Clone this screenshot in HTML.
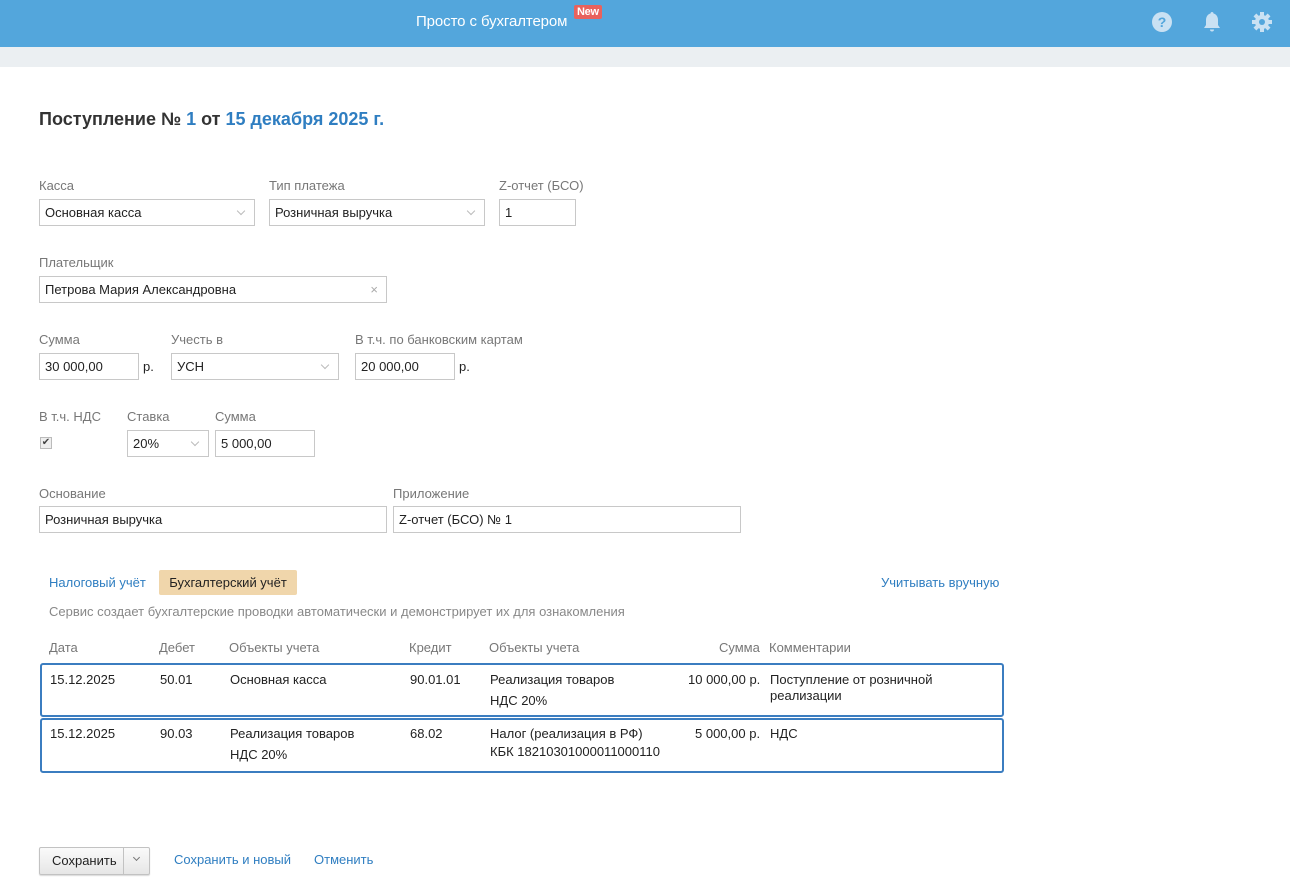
<!DOCTYPE html>
<html><head><meta charset="utf-8"><style>
*{box-sizing:border-box;margin:0;padding:0}
body{width:1290px;height:885px;position:relative;background:#fff;font-family:"Liberation Sans",Arial,sans-serif;font-size:13px;color:#222;overflow:hidden}
.a{position:absolute;white-space:nowrap}
.hdr{position:absolute;left:0;top:0;width:1290px;height:47px;background:#53a6dc}
.strip{position:absolute;left:0;top:47px;width:1290px;height:20px;background:#ebeff2}
.lbl{color:#777;font-size:13px}
.inp{position:absolute;height:27px;border:1px solid #c8c8c8;background:#fff;padding:0 5px;line-height:25px;font-size:13px;color:#222}
.dd:after{content:"";position:absolute;right:10px;top:8px;width:5px;height:5px;border-right:1px solid #bbb;border-bottom:1px solid #bbb;transform:rotate(45deg)}
.link{color:#2f7ec1}
.row{position:absolute;left:40px;width:964px;border:2px solid #3b7dc0;border-radius:3px}
.th{color:#777}
</style></head><body>
<div class="hdr"></div>
<div class="a" style="left:416px;top:13px;color:#fff;font-size:15px;letter-spacing:-0.1px">Просто с бухгалтером</div>
<div class="a" style="left:574px;top:5px;background:#e8625d;color:#fff;font-size:11px;font-weight:bold;padding:1px 3px;border-radius:2px;letter-spacing:-0.3px">New</div>
<svg class="a" style="left:1151px;top:11px" width="22" height="22" viewBox="0 0 22 22"><circle cx="11" cy="11" r="10" fill="#c9e1f3"/><text x="11" y="16" text-anchor="middle" font-size="14" font-weight="bold" fill="#53a6dc" font-family="Liberation Sans">?</text></svg>
<svg class="a" style="left:1202px;top:11px" width="20" height="22" viewBox="0 0 20 22"><path d="M10 1c-1 0-1.5.7-1.5 1.5C5.5 3.3 4 6 4 9v5l-2 3h16l-2-3V9c0-3-1.5-5.7-4.5-6.5C11.5 1.7 11 1 10 1zM8 18.5a2 2 0 0 0 4 0z" fill="#c9e1f3"/></svg>
<svg class="a" style="left:1251px;top:11px" width="22" height="22" viewBox="0 0 22 22"><g fill="#c9e1f3"><circle cx="11" cy="11" r="7"/><rect x="9" y="1" width="4" height="20"/><rect x="1" y="9" width="20" height="4"/><rect x="9" y="1" width="4" height="20" transform="rotate(45 11 11)"/><rect x="9" y="1" width="4" height="20" transform="rotate(-45 11 11)"/></g><circle cx="11" cy="11" r="3" fill="#53a6dc"/></svg>
<div class="strip"></div>

<div class="a" style="left:39px;top:109px;font-size:18px;font-weight:bold;color:#333">Поступление № <span class="link">1</span> от <span class="link">15 декабря 2025 г.</span></div>

<div class="a lbl" style="left:39px;top:178px">Касса</div>
<div class="inp dd" style="left:39px;top:199px;width:216px">Основная касса</div>
<div class="a lbl" style="left:269px;top:178px">Тип платежа</div>
<div class="inp dd" style="left:269px;top:199px;width:216px">Розничная выручка</div>
<div class="a lbl" style="left:499px;top:178px">Z-отчет (БСО)</div>
<div class="inp" style="left:499px;top:199px;width:77px">1</div>

<div class="a lbl" style="left:39px;top:255px">Плательщик</div>
<div class="inp" style="left:39px;top:276px;width:348px">Петрова Мария Александровна<span style="position:absolute;right:8px;color:#aaa">×</span></div>

<div class="a lbl" style="left:39px;top:332px">Сумма</div>
<div class="inp" style="left:39px;top:353px;width:100px">30 000,00</div>
<div class="a" style="left:143px;top:359px">р.</div>
<div class="a lbl" style="left:171px;top:332px">Учесть в</div>
<div class="inp dd" style="left:171px;top:353px;width:168px">УСН</div>
<div class="a lbl" style="left:355px;top:332px">В т.ч. по банковским картам</div>
<div class="inp" style="left:355px;top:353px;width:100px">20 000,00</div>
<div class="a" style="left:459px;top:359px">р.</div>

<div class="a lbl" style="left:39px;top:409px">В т.ч. НДС</div>
<div class="a" style="left:40px;top:437px;width:12px;height:12px;border:1px solid #bbb;background:#eee;font-size:10px;line-height:10px;text-align:center;color:#444">✔</div>
<div class="a lbl" style="left:127px;top:409px">Ставка</div>
<div class="inp dd" style="left:127px;top:430px;width:82px">20%</div>
<div class="a lbl" style="left:215px;top:409px">Сумма</div>
<div class="inp" style="left:215px;top:430px;width:100px">5 000,00</div>

<div class="a lbl" style="left:39px;top:486px">Основание</div>
<div class="inp" style="left:39px;top:506px;width:348px">Розничная выручка</div>
<div class="a lbl" style="left:393px;top:486px">Приложение</div>
<div class="inp" style="left:393px;top:506px;width:348px">Z-отчет (БСО) № 1</div>

<div class="a link" style="left:49px;top:575px">Налоговый учёт</div>
<div class="a" style="left:159px;top:570px;width:138px;height:25px;background:#f0d6ab;border-radius:2px;line-height:25px;text-align:center">Бухгалтерский учёт</div>
<div class="a link" style="left:881px;top:575px">Учитывать вручную</div>
<div class="a" style="left:49px;top:604px;color:#888">Сервис создает бухгалтерские проводки автоматически и демонстрирует их для ознакомления</div>

<div class="a th" style="left:49px;top:640px">Дата</div>
<div class="a th" style="left:159px;top:640px">Дебет</div>
<div class="a th" style="left:229px;top:640px">Объекты учета</div>
<div class="a th" style="left:409px;top:640px">Кредит</div>
<div class="a th" style="left:489px;top:640px">Объекты учета</div>
<div class="a th" style="left:719px;top:640px">Сумма</div>
<div class="a th" style="left:769px;top:640px">Комментарии</div>

<div class="row" style="top:663px;height:54px"></div>
<div class="a" style="left:50px;top:672px">15.12.2025</div>
<div class="a" style="left:160px;top:672px">50.01</div>
<div class="a" style="left:230px;top:672px">Основная касса</div>
<div class="a" style="left:410px;top:672px">90.01.01</div>
<div class="a" style="left:490px;top:669px;line-height:21px">Реализация товаров<br>НДС 20%</div>
<div class="a" style="left:688px;top:672px">10 000,00 р.</div>
<div class="a" style="left:770px;top:672px;line-height:16px">Поступление от розничной<br>реализации</div>

<div class="row" style="top:718px;height:55px"></div>
<div class="a" style="left:50px;top:726px">15.12.2025</div>
<div class="a" style="left:160px;top:726px">90.03</div>
<div class="a" style="left:230px;top:723px;line-height:21px">Реализация товаров<br>НДС 20%</div>
<div class="a" style="left:410px;top:726px">68.02</div>
<div class="a" style="left:490px;top:725px;line-height:18px">Налог (реализация в РФ)<br>КБК 18210301000011000110</div>
<div class="a" style="left:695px;top:726px">5 000,00 р.</div>
<div class="a" style="left:770px;top:726px">НДС</div>

<div class="a" style="left:39px;top:847px;width:111px;height:28px;border:1px solid #c2c2c2;border-radius:2px;background:linear-gradient(#fafafa,#e6e6e6);box-shadow:0 1px 1px rgba(0,0,0,.15)">
<span style="position:absolute;left:12px;top:5px">Сохранить</span>
<span style="position:absolute;left:83px;top:0;width:1px;height:26px;background:#c2c2c2"></span>
<span style="position:absolute;left:94px;top:7px;width:5px;height:5px;border-right:1px solid #777;border-bottom:1px solid #777;transform:rotate(45deg)"></span>
</div>
<div class="a link" style="left:174px;top:852px">Сохранить и новый</div>
<div class="a link" style="left:314px;top:852px">Отменить</div>
</body></html>
